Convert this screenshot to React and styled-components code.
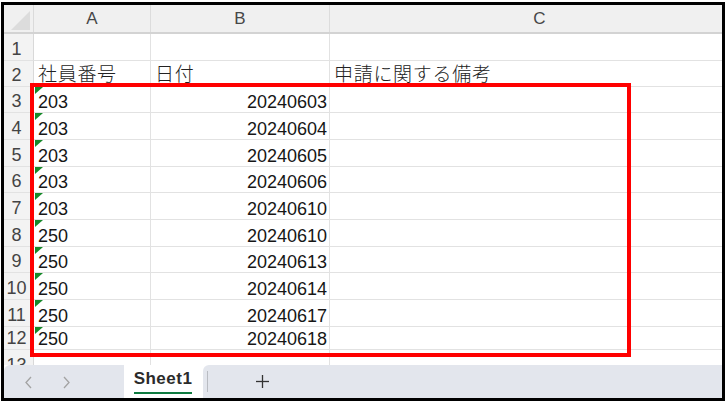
import React from 'react';
import styled, { createGlobalStyle } from 'styled-components';

const Global = createGlobalStyle`
  html, body { margin: 0; padding: 0; background: #fff; }
  body { font-family: "Liberation Sans", Arial, sans-serif; }
  * { box-sizing: border-box; }
`;

const COLS = '30px 117px 179px 420px';

const Frame = styled.div`
  position: relative;
  margin: 2px 0 0 1px;
  width: 724px;
  height: 399px;
  border: 3px solid #000;
  display: flex;
  flex-direction: column;
  overflow: hidden;
  background: #fff;
`;

const HeaderRow = styled.div`
  display: grid;
  grid-template-columns: ${COLS};
  height: 29px;
  flex: none;
  background: #f0f0f0;
  border-bottom: 2px solid #d3d3d3;
`;

const Corner = styled.div`
  position: relative;
  border-right: 1px solid #dadada;
`;

const CornerMark = styled.svg`
  position: absolute;
  right: 2px;
  bottom: 1px;
`;

const ColHead = styled.div`
  display: flex;
  align-items: center;
  justify-content: center;
  padding-top: 1px;
  font-size: 17px;
  color: #474747;
  border-right: 1px solid #dcdcdc;
`;

const Body = styled.div`
  height: 331px;
  flex: none;
  overflow: hidden;
  display: flex;
  flex-direction: column;
`;

const Row = styled.div`
  display: grid;
  grid-template-columns: ${COLS};
  height: ${(p) => p.$h}px;
  flex: none;
`;

const RowNum = styled.div`
  display: flex;
  align-items: flex-end;
  justify-content: center;
  padding-right: 4px;
  padding-bottom: 1px;
  background: #f3f3f3;
  border-right: 1px solid #d9d9d9;
  border-bottom: 1px solid #e2e2e2;
  font-size: 18px;
  line-height: 20px;
  color: #444;
`;

const Cell = styled.div`
  position: relative;
  display: flex;
  align-items: flex-end;
  justify-content: ${(p) => (p.$right ? 'flex-end' : 'flex-start')};
  padding: 0 ${(p) => (p.$right ? '2px' : '4px')} ${(p) => (p.$jp ? '3px' : '0')} 4px;
  border-right: 1px solid #e2e2e2;
  border-bottom: 1px solid #e2e2e2;
  font-size: 18px;
  line-height: 20px;
  color: #161616;
  white-space: nowrap;
`;

const JpText = styled.span`
  font-family: "Noto Sans CJK JP", "Noto Sans", sans-serif;
  font-weight: 300;
  font-size: 19px;
  letter-spacing: 0.7px;
  color: #222;
`;

const ErrorMark = styled.span`
  position: absolute;
  top: 0;
  left: 1px;
  width: 0;
  height: 0;
  border-top: 7px solid #178a2b;
  border-right: 8px solid transparent;
`;

const Highlight = styled.div`
  position: absolute;
  left: 26px;
  top: 78px;
  width: 601px;
  height: 274px;
  border: 4px solid #ff0000;
  pointer-events: none;
`;

const TabBar = styled.div`
  height: 33px;
  flex: none;
  display: flex;
  background: #fff;
`;

const NavArea = styled.div`
  width: 120px;
  display: flex;
  align-items: center;
  gap: 29px;
  padding: 2px 0 0 20px;
  background: #e3e6ed;
  border-top-left-radius: 6px;
`;

const ActiveTab = styled.div`
  width: 78px;
  display: flex;
  justify-content: center;
  padding-top: 5px;
  background: #fff;
  border-bottom-left-radius: 6px;
  border-bottom-right-radius: 6px;
`;

const TabLabel = styled.span`
  display: inline-block;
  height: 29px;
  font-weight: 700;
  font-size: 17px;
  letter-spacing: 0.5px;
  line-height: 18px;
  padding-bottom: 4px;
  color: #2b2b2b;
  border-bottom: 2px solid #107c41;
  align-self: flex-start;
  height: auto;
`;

const RestArea = styled.div`
  flex: 1;
  display: flex;
  align-items: center;
  margin-left: 1px;
  background: #e3e6ed;
  border-top-left-radius: 6px;
`;

const Divider = styled.span`
  width: 1px;
  height: 21px;
  margin: 0 48px 0 4px;
  background: #b9bcc2;
`;

const Icon = styled.svg`
  display: block;
  flex: none;
`;

const dataRows = [
  ['203', '20240603'],
  ['203', '20240604'],
  ['203', '20240605'],
  ['203', '20240606'],
  ['203', '20240610'],
  ['250', '20240610'],
  ['250', '20240613'],
  ['250', '20240614'],
  ['250', '20240617'],
  ['250', '20240618'],
];

const heights = [27, 26, 26, 27, 27, 26, 27, 27, 26, 27, 27, 23, 27];

export default function App() {
  return (
    <>
      <Global />
      <Frame>
        <HeaderRow>
          <Corner>
            <CornerMark width="20" height="20" viewBox="0 0 20 20">
              <polygon points="19,0 19,19 0,19" fill="#dcdcdc" />
            </CornerMark>
          </Corner>
          <ColHead>A</ColHead>
          <ColHead>B</ColHead>
          <ColHead>C</ColHead>
        </HeaderRow>
        <Body>
          <Row $h={heights[0]}>
            <RowNum>1</RowNum>
            <Cell />
            <Cell />
            <Cell />
          </Row>
          <Row $h={heights[1]}>
            <RowNum>2</RowNum>
            <Cell $jp>
              <JpText>社員番号</JpText>
            </Cell>
            <Cell $jp>
              <JpText>日付</JpText>
            </Cell>
            <Cell $jp>
              <JpText>申請に関する備考</JpText>
            </Cell>
          </Row>
          {dataRows.map(([id, date], i) => (
            <Row key={i} $h={heights[i + 2]}>
              <RowNum>{i + 3}</RowNum>
              <Cell>
                <ErrorMark />
                {id}
              </Cell>
              <Cell $right>{date}</Cell>
              <Cell />
            </Row>
          ))}
          <Row $h={heights[12]}>
            <RowNum>13</RowNum>
            <Cell />
            <Cell />
            <Cell />
          </Row>
        </Body>
        <TabBar>
          <NavArea>
            <Icon width="9" height="13" viewBox="0 0 9 13">
              <polyline points="7,1 2,6.5 7,12" fill="none" stroke="#a3a3a3" strokeWidth="1.3" />
            </Icon>
            <Icon width="9" height="13" viewBox="0 0 9 13">
              <polyline points="2,1 7,6.5 2,12" fill="none" stroke="#a3a3a3" strokeWidth="1.3" />
            </Icon>
          </NavArea>
          <ActiveTab>
            <TabLabel>Sheet1</TabLabel>
          </ActiveTab>
          <RestArea>
            <Divider />
            <Icon width="13" height="13" viewBox="0 0 13 13">
              <line x1="6.5" y1="0" x2="6.5" y2="13" stroke="#333" strokeWidth="1.3" />
              <line x1="0" y1="6.5" x2="13" y2="6.5" stroke="#333" strokeWidth="1.3" />
            </Icon>
          </RestArea>
        </TabBar>
        <Highlight />
      </Frame>
    </>
  );
}
